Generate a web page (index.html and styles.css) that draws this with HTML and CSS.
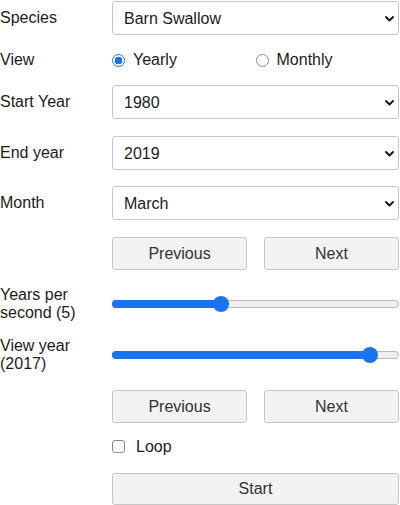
FILE: index.html
```html
<!DOCTYPE html>
<html>
<head>
<meta charset="utf-8">
<link rel="stylesheet" href="styles.css">
</head>
<body>
<div class="form">
  <div class="row r-species">
    <div class="label">Species</div>
    <div class="control select-wrap">
      <select class="select"><option>Barn Swallow</option></select>
      <svg class="chev" width="9" height="6" viewBox="0 0 9 6"><path d="M1 1 L4.5 4.5 L8 1" fill="none" stroke="#111" stroke-width="1.8" stroke-linecap="round" stroke-linejoin="round"/></svg>
    </div>
  </div>
  <div class="row r-view">
    <div class="label">View</div>
    <div class="control radios">
      <label class="opt"><span class="radio checked"></span>Yearly</label>
      <label class="opt"><span class="radio"></span>Monthly</label>
    </div>
  </div>
  <div class="row r-sel">
    <div class="label">Start Year</div>
    <div class="control select-wrap">
      <select class="select"><option>1980</option></select>
      <svg class="chev" width="9" height="6" viewBox="0 0 9 6"><path d="M1 1 L4.5 4.5 L8 1" fill="none" stroke="#111" stroke-width="1.8" stroke-linecap="round" stroke-linejoin="round"/></svg>
    </div>
  </div>
  <div class="row r-sel m17">
    <div class="label">End year</div>
    <div class="control select-wrap">
      <select class="select"><option>2019</option></select>
      <svg class="chev" width="9" height="6" viewBox="0 0 9 6"><path d="M1 1 L4.5 4.5 L8 1" fill="none" stroke="#111" stroke-width="1.8" stroke-linecap="round" stroke-linejoin="round"/></svg>
    </div>
  </div>
  <div class="row r-sel m16">
    <div class="label">Month</div>
    <div class="control select-wrap">
      <select class="select"><option>March</option></select>
      <svg class="chev" width="9" height="6" viewBox="0 0 9 6"><path d="M1 1 L4.5 4.5 L8 1" fill="none" stroke="#111" stroke-width="1.8" stroke-linecap="round" stroke-linejoin="round"/></svg>
    </div>
  </div>
  <div class="row r-btn m17">
    <div class="label"></div>
    <div class="control btns">
      <button class="btn">Previous</button>
      <button class="btn">Next</button>
    </div>
  </div>
  <div class="row r-slider m16">
    <div class="label">Years per second (5)</div>
    <div class="control">
      <div class="slider"><div class="fill" style="width:38%"></div><div class="thumb" style="left:38%"></div></div>
    </div>
  </div>
  <div class="row r-slider m15">
    <div class="label">View year (2017)</div>
    <div class="control">
      <div class="slider"><div class="fill" style="width:90.2%"></div><div class="thumb" style="left:90.2%"></div></div>
    </div>
  </div>
  <div class="row r-btn m17">
    <div class="label"></div>
    <div class="control btns">
      <button class="btn">Previous</button>
      <button class="btn">Next</button>
    </div>
  </div>
  <div class="row r-loop">
    <div class="label"></div>
    <label class="control loop"><span class="check"></span>Loop</label>
  </div>
  <div class="row r-start m3">
    <div class="label"></div>
    <div class="control"><button class="btn wide">Start</button></div>
  </div>
</div>
</body>
</html>
```
FILE: styles.css
```css
html, body {
  margin: 0;
  padding: 0;
  background: #fff;
}
body {
  font-family: "Liberation Sans", Arial, sans-serif;
  font-size: 16px;
  color: #1c1c1c;
  overflow: hidden;
}
.form {
  width: 399px;
  display: flex;
  flex-direction: column;
  padding-top: 1px;
}
.row {
  display: flex;
  align-items: center;
}
.label {
  width: 112px;
  flex: none;
  line-height: 18px;
  padding-right: 8px;
  box-sizing: border-box;
}
.control {
  flex: 1;
  min-width: 0;
}
.r-species { height: 34px; }
.r-view { height: 50px; }
.r-sel { height: 34px; }
.r-btn { height: 33px; }
.r-slider { height: 36px; }
.r-loop { height: 47px; }
.r-start { height: 32px; }
.m17 { margin-top: 17px; }
.m16 { margin-top: 16px; }
.m15 { margin-top: 15px; }
.m3 { margin-top: 3px; }

.select-wrap {
  position: relative;
  height: 100%;
}
.select {
  appearance: none;
  -webkit-appearance: none;
  width: 100%;
  height: 100%;
  box-sizing: border-box;
  border: 1px solid #c7c7c7;
  border-radius: 3px;
  background: #fff;
  font-family: inherit;
  font-size: 16px;
  color: #1c1c1c;
  padding: 0 0 0 11px;
  margin: 0;
}
.chev {
  position: absolute;
  right: 5px;
  top: 50%;
  margin-top: -2px;
  pointer-events: none;
}

.radios {
  display: flex;
}
.opt {
  flex: 1;
  display: flex;
  align-items: center;
}
.radio {
  width: 13px;
  height: 13px;
  box-sizing: border-box;
  border-radius: 50%;
  border: 1px solid #8a8a8a;
  background: #fff;
  margin-right: 8px;
  flex: none;
}
.radio.checked {
  border: 1.5px solid #1a73f0;
  background: radial-gradient(circle, #1a73f0 0 3.6px, #fff 4px);
}

.btns {
  display: flex;
  gap: 17px;
  height: 100%;
}
.btn {
  flex: 1;
  height: 100%;
  box-sizing: border-box;
  background: #f2f2f2;
  border: 1px solid #c6c6c6;
  border-radius: 3px;
  font-family: inherit;
  font-size: 16px;
  color: #333;
  margin: 0;
  padding: 0;
}
.btn.wide {
  width: 100%;
}
.r-start .control {
  height: 100%;
}

.slider {
  position: relative;
  height: 8px;
  box-sizing: border-box;
  border: 1px solid #b9b9b9;
  border-radius: 4px;
  background: #efefef;
}
.fill {
  position: absolute;
  left: -1px;
  top: -1px;
  bottom: -1px;
  background: #1a73f0;
  border-radius: 4px 0 0 4px;
}
.thumb {
  position: absolute;
  top: 50%;
  width: 16px;
  height: 16px;
  margin: -8px 0 0 -8px;
  border-radius: 50%;
  background: #1a73f0;
}

.loop {
  display: flex;
  align-items: center;
}
.check {
  width: 13px;
  height: 13px;
  box-sizing: border-box;
  border: 1px solid #8a8a8a;
  border-radius: 3px;
  background: #fff;
  margin-right: 11px;
  flex: none;
}
```
